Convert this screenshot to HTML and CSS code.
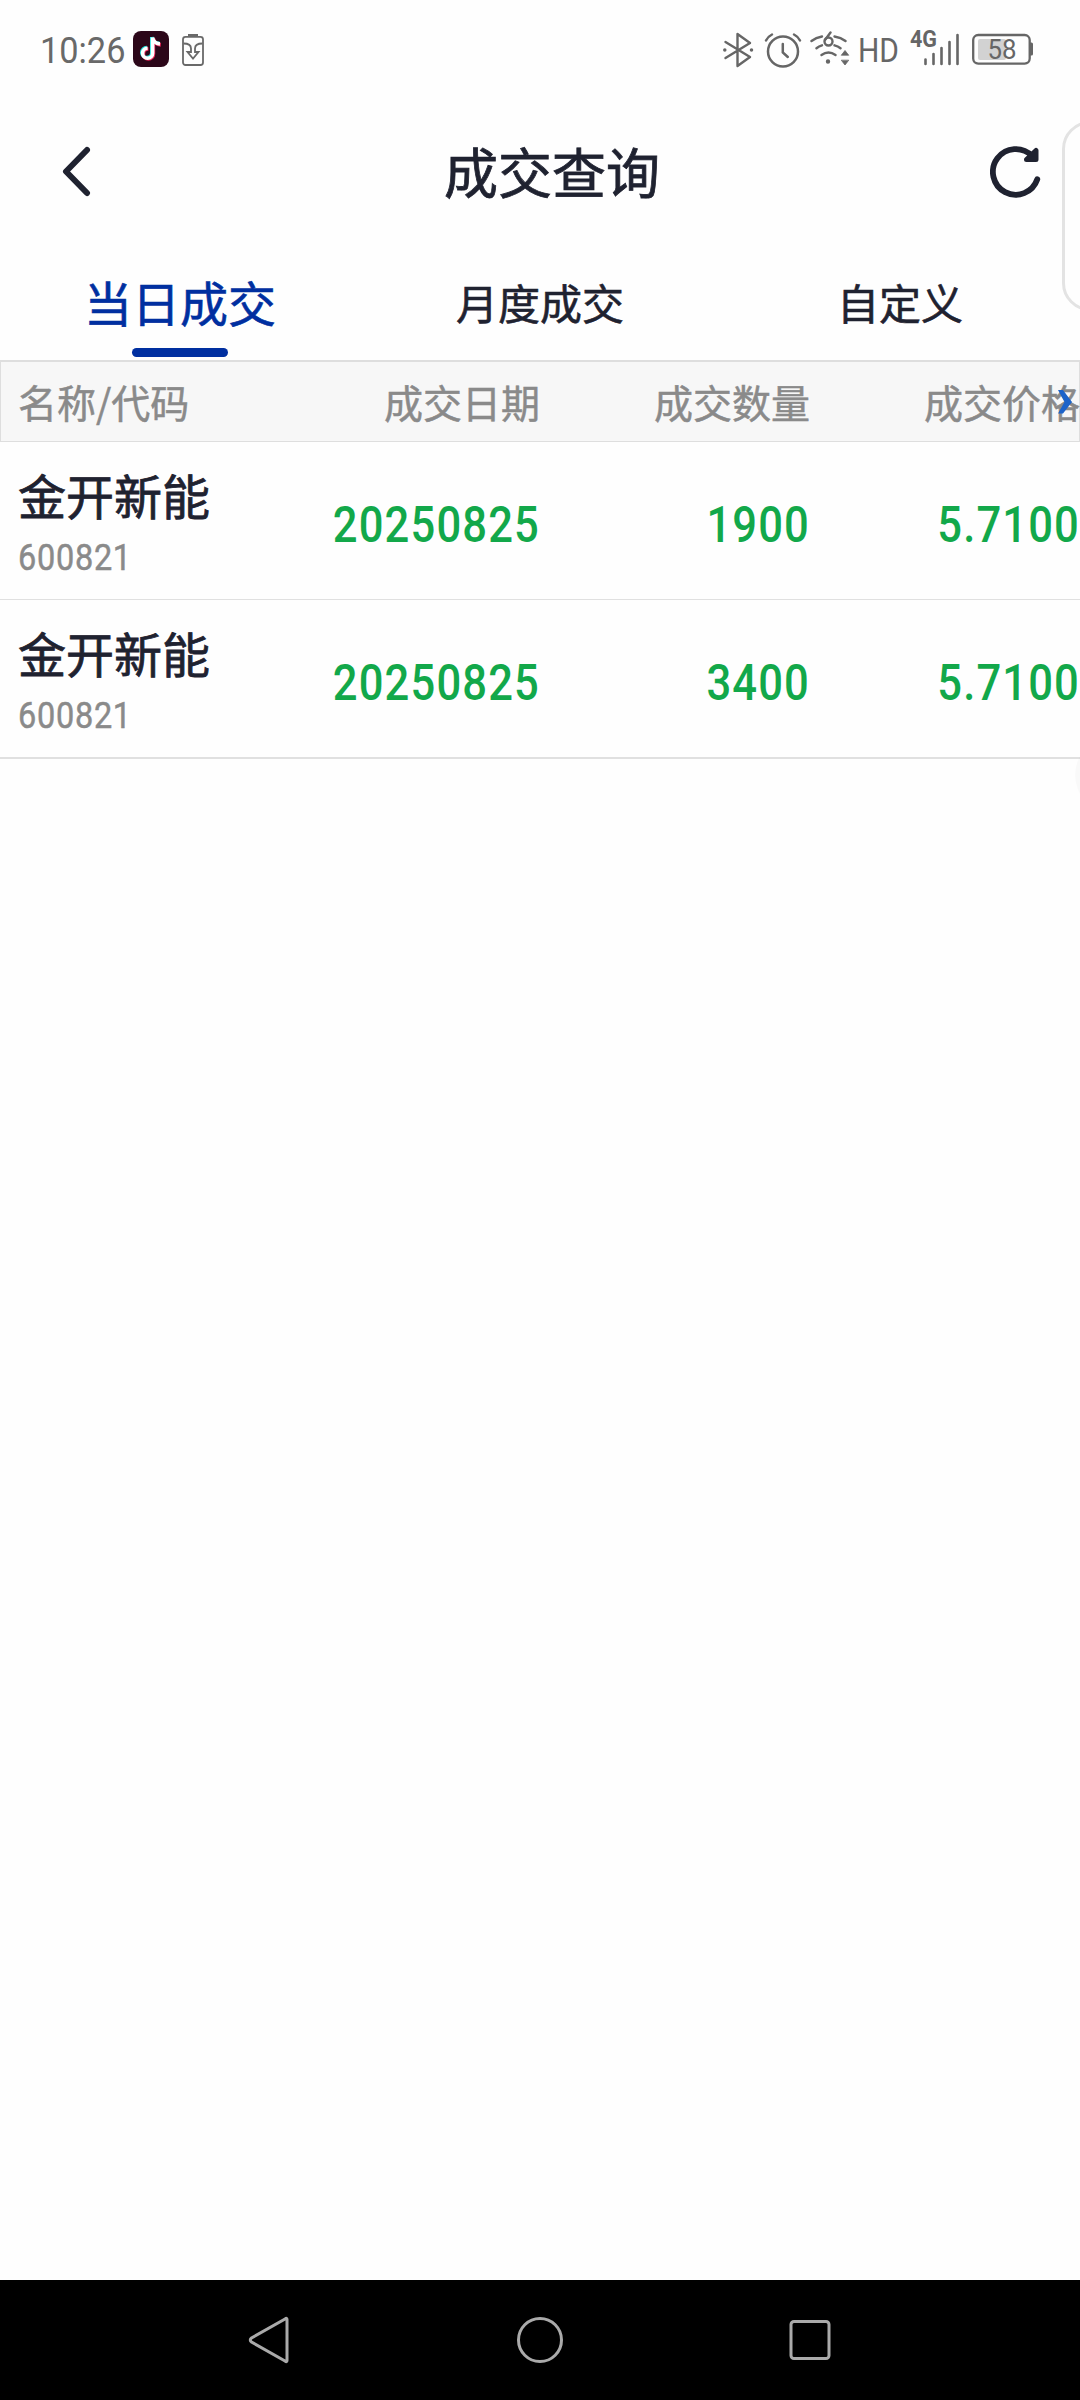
FILE: index.html
```html
<!DOCTYPE html>
<html lang="zh-CN">
<head>
<meta charset="utf-8">
<title>成交查询</title>
<link rel="stylesheet" href="styles.css">
</head>
<body>
<div class="screen">
  <div class="status">
    <span class="time">10:26</span>
    <svg class="app" width="36" height="36" viewBox="0 0 36 36">
      <rect width="36" height="36" rx="8" fill="#2c0719"/>
      <g fill="none" stroke-width="3.6">
        <path stroke="#25e5e2" d="M18.8 6V21.5a5 5 0 1 1-5-5M18.8 6c.6 4 3.4 6 7.4 6.4"/>
        <path stroke="#f0265a" d="M20.4 7.500V23a5 5 0 1 1-5-5M20.400 7.500c.6 4 3.400 6 7.400 6.400"/>
        <path stroke="#fff" d="M19.600 6.500V22.200a5 5 0 1 1-5-5M19.600 6.500c.6 4 3.400 6 7.400 6.400"/>
      </g>
    </svg>
    <svg class="saver" width="22" height="34" viewBox="0 0 22 34" fill="none" stroke="#696969" stroke-width="1.800">
      <path d="M6 2.500h10" stroke-width="3"/>
      <rect x="1" y="3.800" width="20" height="28.200" rx="2.500"/>
      <path d="M1.500 10.500C6 10.500 9 12 9 15.500V19H5.500L11 25.500L16.500 19H13V15.500C13 12 16 10.500 20.500 10.500"/>
    </svg>
    <div class="signals">
      <svg width="32" height="38" viewBox="0 0 32 38" fill="none" stroke="#666" stroke-width="2.400" stroke-linejoin="round" stroke-linecap="round">
        <path d="M3.500 11 28 26 15.500 35V3L28 12 3.500 27"/>
        <circle cx="2.800" cy="19" r="1" fill="#666" stroke-width="1.500"/><circle cx="29.500" cy="19" r="1" fill="#666" stroke-width="1.500"/>
      </svg>
      <svg class="alarm" width="38" height="38" viewBox="0 0 38 38" fill="none" stroke="#666" stroke-width="2.500" stroke-linecap="round">
        <circle cx="19" cy="20.500" r="15"/><path d="M18.800 13v8.500l5 4.500M2 9.500Q4 5.500 8 3.500M30 3.500Q34 5.500 36 9.500"/>
      </svg>
      <svg class="wifi" width="40" height="38" viewBox="0 0 40 38" fill="none" stroke="#666" stroke-width="2.400" stroke-linecap="round">
        <path d="M1.500 10Q6 6.500 12 5.500M24.500 5.500Q31 6.500 35.500 10M6.500 17.200Q9 15.200 12 14.300M24.500 14.300Q28 15.200 30.500 17.200M11.500 24Q18.500 19 25.500 24"/>
        <path d="M20.500 1.500 15 9"/><circle cx="18.500" cy="10.500" r="4"/><circle cx="18" cy="30.500" r="1" fill="#666"/>
        <path d="m31.500 24 3.500-4.500 3.500 4.500zM31.500 29.500l3.500 4.500 3.500-4.500z" fill="#666" stroke-width=".8"/>
      </svg>
      <svg class="hd" width="44" height="38" viewBox="0 0 44 38"><text x="0" y="31" textLength="41" lengthAdjust="spacingAndGlyphs">HD</text></svg>
      <svg class="cell" width="54" height="42" viewBox="0 -4 54 42" fill="none" stroke="#666" stroke-width="2.600" stroke-linecap="round">
        <text class="gen" x="1" y="16" textLength="27" lengthAdjust="spacingAndGlyphs">4G</text>
        <path d="M16.500 28.500V33M24.500 23V33M32.500 17V33M40.500 11V33M48.500 4V33"/>
      </svg>
      <svg class="battery" width="62" height="38" viewBox="0 0 62 38">
        <rect x="6" y="8" width="28" height="21" rx="2" fill="#d2d2d2"/>
        <rect x="1.200" y="4" width="56.500" height="28.600" rx="5" fill="none" stroke="#666" stroke-width="2.300"/>
        <path d="M58 11.500h1.500q1.500 0 1.500 1.500v10q0 1.500-1.500 1.500H58z" fill="#666"/>
        <text x="15.500" y="28" textLength="29" lengthAdjust="spacingAndGlyphs">58</text>
      </svg>
    </div>
  </div>

  <header class="titlebar">
    <svg width="32" height="52" viewBox="0 0 32 52" fill="none" stroke="#1f2230" stroke-width="6" stroke-linecap="round" stroke-linejoin="round"><path d="M27 5 6 26.500 27 48"/></svg>
    <h1>成交查询</h1>
    <svg width="52" height="54" viewBox="0 0 52 54" fill="none" stroke="#1f2230" stroke-width="5.800" stroke-linecap="round" stroke-linejoin="round"><path d="M47.300 35.300A22.800 22.800 0 1 1 42 12"/><path d="M46 6.500V15.500H36.500Z" stroke-width="5" fill="#1f2230"/></svg>
    <div class="side-panel"></div>
  </header>

  <nav class="tabs">
    <div class="tab active">当日成交</div>
    <div class="tab">月度成交</div>
    <div class="tab">自定义</div>
  </nav>

  <main class="table">
    <div class="row head">
      <div>名称/代码</div><div>成交日期</div><div>成交数量</div><div>成交价格</div>
      <svg class="more" width="16" height="24" viewBox="0 0 16 24"><path d="M1 0H6L15 12 6 23.500H1L7.500 12Z" fill="#1c63c9"/></svg>
    </div>
    <div class="row">
      <div><div class="name">金开新能</div><div class="code">600821</div></div>
      <div class="num">20250825</div><div class="num">1900</div><div class="num">5.7100</div>
    </div>
    <div class="row last">
      <div><div class="name">金开新能</div><div class="code">600821</div></div>
      <div class="num">20250825</div><div class="num">3400</div><div class="num">5.7100</div>
      <div class="bubble"></div>
    </div>
  </main>

  <footer class="sysnav">
    <svg width="48" height="50" viewBox="0 0 48 50"><path d="M41 4.500V45.500Q41 47.500 39 46L5.500 27Q3 25 5.500 23L39 4Q41 2.500 41 4.500Z"/></svg>
    <svg width="48" height="50" viewBox="0 0 48 50"><circle cx="24" cy="25" r="21.500"/></svg>
    <svg width="48" height="50" viewBox="0 0 48 50"><rect x="5" y="6.500" width="38" height="37" rx="3"/></svg>
  </footer>
</div>
</body>
</html>
```

FILE: styles.css
```css
* { box-sizing: border-box; }
body { margin: 0; font-family: "Noto Sans CJK SC", sans-serif; color: #1f2230; background: #fefefe; }
svg { display: block; flex: none; }
.screen { width: 1080px; height: 2400px; display: flex; flex-direction: column; overflow: hidden; }

.status { height: 100px; padding: 0 46px 0 40px; display: flex; align-items: center; }
.time { font: 400 36.500px/40px Roboto, sans-serif; color: #696969; width: 93px; height: 38px; transform: scaleX(.94); transform-origin: left; }
.app { margin-top: -2px; }
.saver { margin-left: 13px; margin-top: -1px; }
.signals { margin-left: auto; display: flex; height: 38px; font-family: Roboto, sans-serif; }
.signals text { fill: #666; stroke: none; }
.alarm { margin-left: 10px; }
.wifi { margin-left: 8px; }
.hd { margin-left: 8px; font-size: 33px; font-weight: 400; }
.gen { font-size: 23px; font-weight: 700; }
.cell { margin: -4px 0 0 7px; }
.battery { margin-left: 9px; font-size: 27px; }

.titlebar { position: relative; height: 142px; padding: 0 38px 0 60px; display: flex; align-items: center; justify-content: space-between; }
h1 { margin: 0 0 1px 22px; font-size: 54px; line-height: 80px; font-weight: 400; -webkit-text-stroke: .8px; }
.side-panel { position: absolute; left: 1062px; top: 21px; width: 60px; height: 190px; border: 3px solid #e3e3e3; border-radius: 28px; }

.tabs { height: 118px; display: grid; grid-template-columns: repeat(3, 1fr); }
.tab { position: relative; text-align: center; font-size: 42px; line-height: 119px; -webkit-text-stroke: .6px; }
.active { font-size: 48px; color: #002fa0; }
.active::after { content: ""; position: absolute; left: 132px; top: 106px; width: 96px; height: 9px; border-radius: 5px; background: #002fa0; }

.table { flex: 1; }
.row { position: relative; height: 158px; padding-left: 18px; display: grid; grid-template-columns: 252px 270px 270px 270px; border-bottom: 1px solid #e0e0e0; }
.row.last { height: 159px; border-bottom-width: 2px; }
.head { height: 82px; padding-left: 17px; border: 1px solid #dedede; border-top-width: 2px; background: #f7f7f7; color: #8a8a8a; font-size: 39px; line-height: 79px; text-align: right; -webkit-text-stroke: .5px; }
.head > :first-child { text-align: left; }
.more { position: absolute; left: 1056px; top: 28px; }
.name { font-size: 48px; line-height: 64px; margin-top: 20px; -webkit-text-stroke: .8px; }
.code { font: 400 36.500px/44px Roboto, sans-serif; letter-spacing: .8px; color: #8a8a8a; margin-top: 10px; transform: scaleX(.89); transform-origin: left; -webkit-text-stroke: .5px; }
.num { font: 500 49.500px/58px Roboto, sans-serif; letter-spacing: 1.300px; color: #12a84a; text-align: right; padding-top: 54px; transform: scaleX(.88); transform-origin: right; }
.bubble { position: absolute; left: 1075px; top: 137px; width: 76px; height: 76px; border-radius: 50%; background: rgba(0, 0, 0, .02); }

.sysnav { height: 120px; padding: 0 246px; background: #000; display: flex; align-items: center; justify-content: space-between; }
.sysnav svg { fill: none; stroke: #aaa; stroke-width: 3; }
```
